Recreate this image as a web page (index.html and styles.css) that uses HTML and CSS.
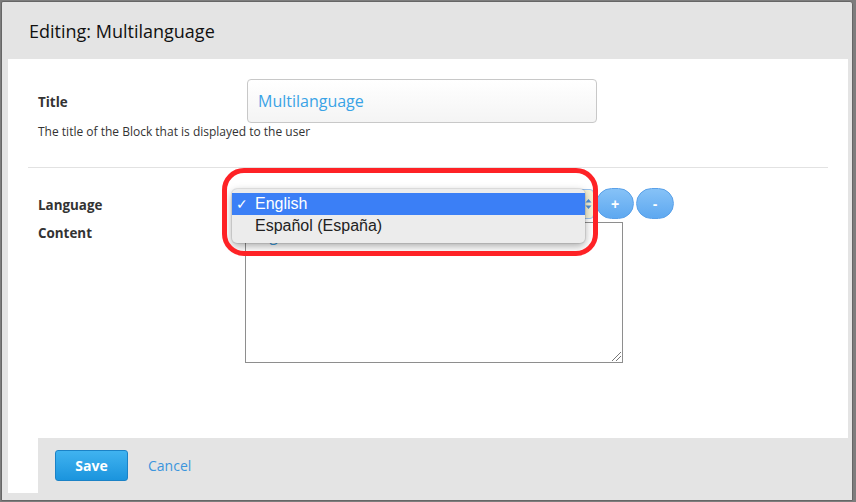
FILE: index.html
```html
<!DOCTYPE html>
<html>
<head>
<meta charset="utf-8">
<link rel="stylesheet" href="styles.css">
</head>
<body>
<div class="dialog">
  <div class="dlg-head"><h1 class="dlg-title">Editing: Multilanguage</h1></div>
  <div class="dlg-body">
    <div class="row-title">
      <label class="lbl lbl-title">Title</label>
      <div class="text-input">Multilanguage</div>
    </div>
    <div class="help">The title of the Block that is displayed to the user</div>
    <div class="rule"></div>
    <div class="row-lang">
      <div class="labels">
        <div class="lbl">Language</div>
        <div class="lbl">Content</div>
      </div>
      <div class="controls">
        <div class="lang-line">
          <div class="select">
            <svg class="sel-arrows" width="7" height="12" viewBox="0 0 7 12"><path d="M0.5 4.5 L3.5 1 L6.5 4.5 Z M0.5 7.5 L3.5 11 L6.5 7.5 Z" fill="#4f8fd8"/></svg>
          </div>
          <button class="pill">+</button>
          <button class="pill">-</button>
        </div>
        <div class="textarea">English<span class="grip"></span></div>
      </div>
    </div>
    <div class="popup">
      <div class="opt opt-sel"><span class="check">✓</span>English</div>
      <div class="opt"><span class="check"></span>Español (España)</div>
    </div>
    <div class="ring"></div>
  </div>
  <div class="dlg-foot">
    <div class="foot-gap"></div>
    <div class="foot-bar">
      <button class="btn-save">Save</button>
      <a class="cancel">Cancel</a>
    </div>
  </div>
  <div class="dlg-bottom"></div>
</div>
</body>
</html>
```

FILE: styles.css
```css
html, body { margin: 0; padding: 0; }
body {
  background: #7d7d7d;
  width: 856px;
  height: 502px;
  overflow: hidden;
  font-family: "Open Sans", "DejaVu Sans", sans-serif;
}
.dialog {
  margin: 1px 0 0 1px;
  width: 852px;
  height: 500px;
  box-sizing: border-box;
  border: 1px solid #666;
  border-radius: 2px 3px 0 0;
  background: #e4e4e4;
  display: flex;
  flex-direction: column;
}
.dlg-head {
  height: 57px;
  flex: none;
  padding-left: 27px;
  box-sizing: border-box;
}
.dlg-title {
  margin: 0;
  padding-top: 16px;
  font-size: 18px;
  font-weight: 400;
  line-height: 26px;
  color: #111;
}
.dlg-body {
  position: relative;
  height: 379px;
  flex: none;
  margin: 0 4px 0 6px;
  background: #fff;
  padding: 20px 0 0 30px;
  box-sizing: border-box;
}
.row-title {
  display: flex;
  align-items: center;
}
.lbl {
  font-size: 13.4px;
  font-weight: 700;
  color: #333;
  line-height: 18px;
}
.lbl-title { width: 209px; padding-top: 2px; }
.text-input {
  width: 350px;
  height: 44px;
  box-sizing: border-box;
  border: 1px solid #c8c8c8;
  border-radius: 4px;
  background: linear-gradient(#ffffff, #f4f4f4);
  padding-left: 10px;
  font-size: 16px;
  line-height: 42px;
  color: #3aa3e6;
}
.help {
  margin-top: 1px;
  font-size: 12px;
  line-height: 16px;
  color: #333;
}
.rule {
  margin: 27px 20px 0 -10px;
  border-top: 1px solid #e2e2e2;
}
.row-lang {
  display: flex;
  margin-top: 20px;
}
.labels {
  width: 195px;
  padding-top: 8px;
  display: flex;
  flex-direction: column;
  gap: 10px;
}
.controls { display: flex; flex-direction: column; }
.lang-line { display: flex; align-items: center; gap: 2px; }
.select {
  width: 361px;
  height: 30px;
  box-sizing: border-box;
  border: 1px solid #9cc3ee;
  border-radius: 4px;
  background: #f5f2d8;
  position: relative;
}
.sel-arrows { position: absolute; right: 1px; top: 8px; }
.pill {
  width: 38px;
  height: 31px;
  border-radius: 16px;
  border: 1px solid #5aa1e9;
  background: linear-gradient(#86c2f7, #5ea8f0);
  color: #fff;
  font-family: "Liberation Sans", sans-serif;
  font-weight: 700;
  font-size: 14px;
  padding: 0;
}
.textarea {
  margin: 3px 0 0 12px;
  width: 378px;
  height: 141px;
  box-sizing: border-box;
  border: 1px solid #8e8e8e;
  position: relative;
  padding: 2px 0 0 6px;
  font-size: 15px;
  line-height: 20px;
  color: #3a9be0;
}
.grip {
  position: absolute;
  right: 1px;
  bottom: 1px;
  width: 9px;
  height: 9px;
  background: linear-gradient(135deg, transparent 45%, #777 45%, #777 52%, transparent 52%, transparent 70%, #777 70%, #777 77%, transparent 77%);
}
.popup {
  position: absolute;
  left: 224px;
  top: 130px;
  width: 353px;
  height: 54px;
  box-sizing: border-box;
  padding-top: 4px;
  background: #ececec;
  border-radius: 5px;
  box-shadow: 0 3px 9px rgba(0,0,0,0.35), 0 0 0 1px rgba(0,0,0,0.08);
  font-family: "Liberation Sans", Arial, sans-serif;
  font-size: 16px;
  color: #222;
}
.opt {
  height: 22px;
  line-height: 22px;
  display: flex;
}
.opt-sel { background: #3b7ff6; color: #fff; }
.check { width: 23px; padding-left: 4px; box-sizing: border-box; font-size: 14px; }
.ring {
  position: absolute;
  left: 214px;
  top: 109px;
  width: 376px;
  height: 88px;
  box-sizing: border-box;
  border: 5px solid #fe2226;
  border-radius: 22px;
}
.dlg-foot {
  height: 55px;
  flex: none;
  display: flex;
  margin-left: 6px;
}
.foot-gap { width: 30px; background: #fff; }
.foot-bar {
  flex: 1;
  display: flex;
  align-items: center;
  padding: 0 0 0 17px;
  gap: 20px;
}
.btn-save {
  width: 73px;
  height: 31px;
  border: 1px solid #1b82c6;
  border-radius: 3px;
  background: linear-gradient(#40b3f0, #1b94dd);
  color: #fff;
  font-family: "Open Sans", sans-serif;
  font-weight: 700;
  font-size: 14px;
  padding: 0;
}
.cancel {
  font-size: 14px;
  color: #3b95dd;
}
.dlg-bottom { flex: 1; }
```
